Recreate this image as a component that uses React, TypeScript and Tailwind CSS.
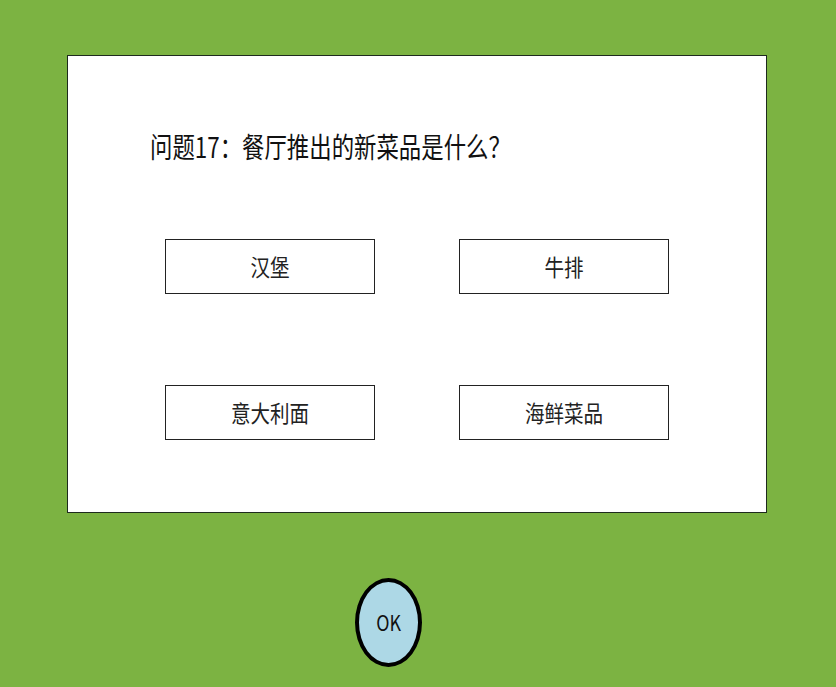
import React from "react";

const font = { fontFamily: '"Noto Sans CJK SC", "Noto Sans", sans-serif' };

function Choice({ label }: { label: string }) {
  return (
    <div className="flex h-[55px] w-[210px] items-center justify-center border border-[#222] bg-white">
      <span className="inline-block scale-x-[0.85] text-[23px] leading-none text-[#222]">{label}</span>
    </div>
  );
}

export default function App() {
  return (
    <div className="h-[687px] w-[836px] overflow-hidden bg-[#7cb342]" style={font}>
      <div className="pl-[67px] pt-[55px]">
        <div className="flex h-[458px] w-[700px] flex-col border border-[#1e2a1e] bg-white">
          <div className="pl-[82px] pt-[76px]">
            <span className="inline-block origin-left scale-x-[0.8] whitespace-nowrap text-[28px] leading-none text-[#111]">
              问题17：餐厅推出的新菜品是什么？
            </span>
          </div>
          <div className="grid grid-cols-[210px_210px] gap-x-[84px] gap-y-[91px] pl-[97px] pt-[76px]">
            <Choice label="汉堡" />
            <Choice label="牛排" />
            <Choice label="意大利面" />
            <Choice label="海鲜菜品" />
          </div>
        </div>
      </div>
      <div className="pl-[355px] pt-[65px]">
        <div className="flex h-[89px] w-[67px] items-center justify-center rounded-[50%] border-4 border-black bg-[#add8e6]">
          <span className="inline-block scale-x-[0.85] text-[21px] leading-none text-[#111]">OK</span>
        </div>
      </div>
    </div>
  );
}
